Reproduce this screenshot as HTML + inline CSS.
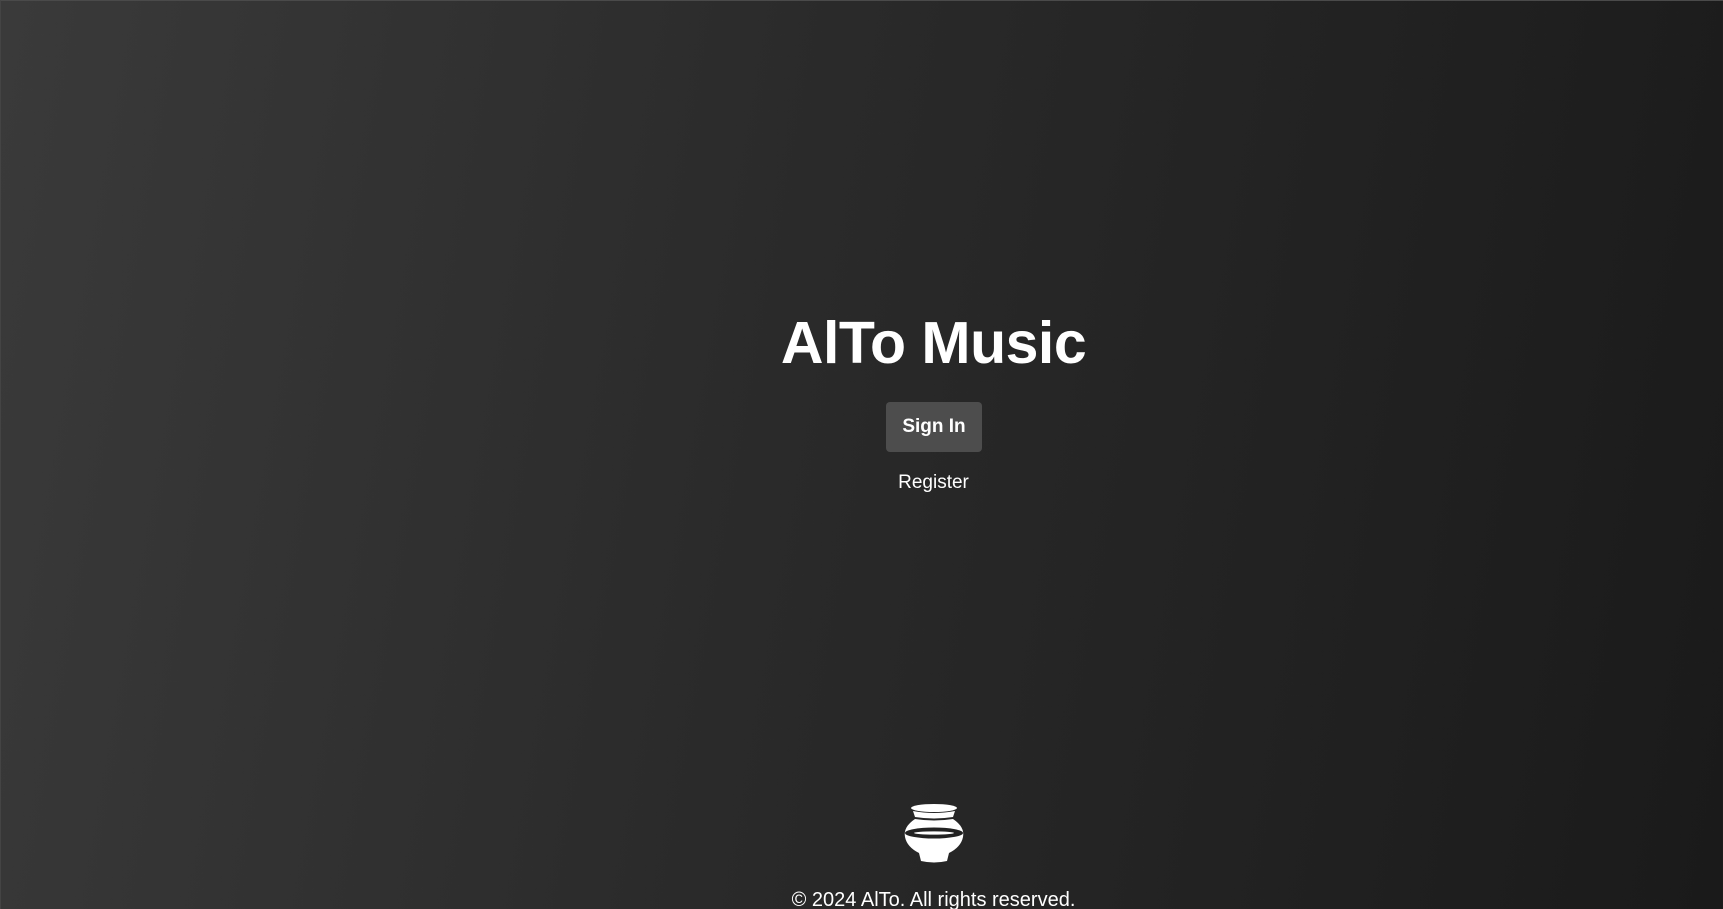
<!DOCTYPE html>
<html><head><meta charset="utf-8"><style>
html,body{margin:0;padding:0;width:1723px;height:909px;overflow:hidden}
body{background:linear-gradient(100deg,#3a3a3a 0%,#2a2a2a 45%,#1a1a1a 100%);font-family:"Liberation Sans",sans-serif;color:#fff;position:relative;border-top:1px solid #4a4a4a;border-left:1px solid #444;box-sizing:border-box}
.c{position:absolute;left:143px;right:0;text-align:center}
h1{top:306px;margin:0;font-size:59px;font-weight:bold;line-height:72px;letter-spacing:-0.5px}
.btn{position:absolute;left:885px;top:401px;width:96px;height:50px;background:#4d4d4d;border-radius:4px;font-weight:bold;font-size:19px;line-height:50px;text-align:center}
.reg{top:470px;font-size:19px;line-height:24px}
.pot{position:absolute;left:900px;top:802px}
.foot{top:887px;font-size:20px;line-height:24px}
</style></head><body>
<h1 class="c">AlTo Music</h1>
<div class="btn">Sign In</div>
<div class="c reg">Register</div>
<svg class="pot" width="66" height="64" viewBox="0 0 66 64">
<ellipse cx="33" cy="5" rx="23" ry="4" fill="#fff"/>
<path d="M12 8 Q33 12 54 8 L52 14 Q33 17 14 14 Z" fill="#fff"/>
<path d="M14 16 Q33 19 52 16 Q64 24 62 34 Q60 44 48 50 L46 58 Q33 61 20 58 L18 50 Q6 44 4 34 Q2 24 14 16 Z" fill="#fff"/>
<ellipse cx="33" cy="30" rx="29" ry="5.5" fill="#222"/>
<ellipse cx="33" cy="30" rx="20" ry="1.6" fill="#fff"/>
</svg>
<div class="c foot">© 2024 AlTo. All rights reserved.</div>
</body></html>
